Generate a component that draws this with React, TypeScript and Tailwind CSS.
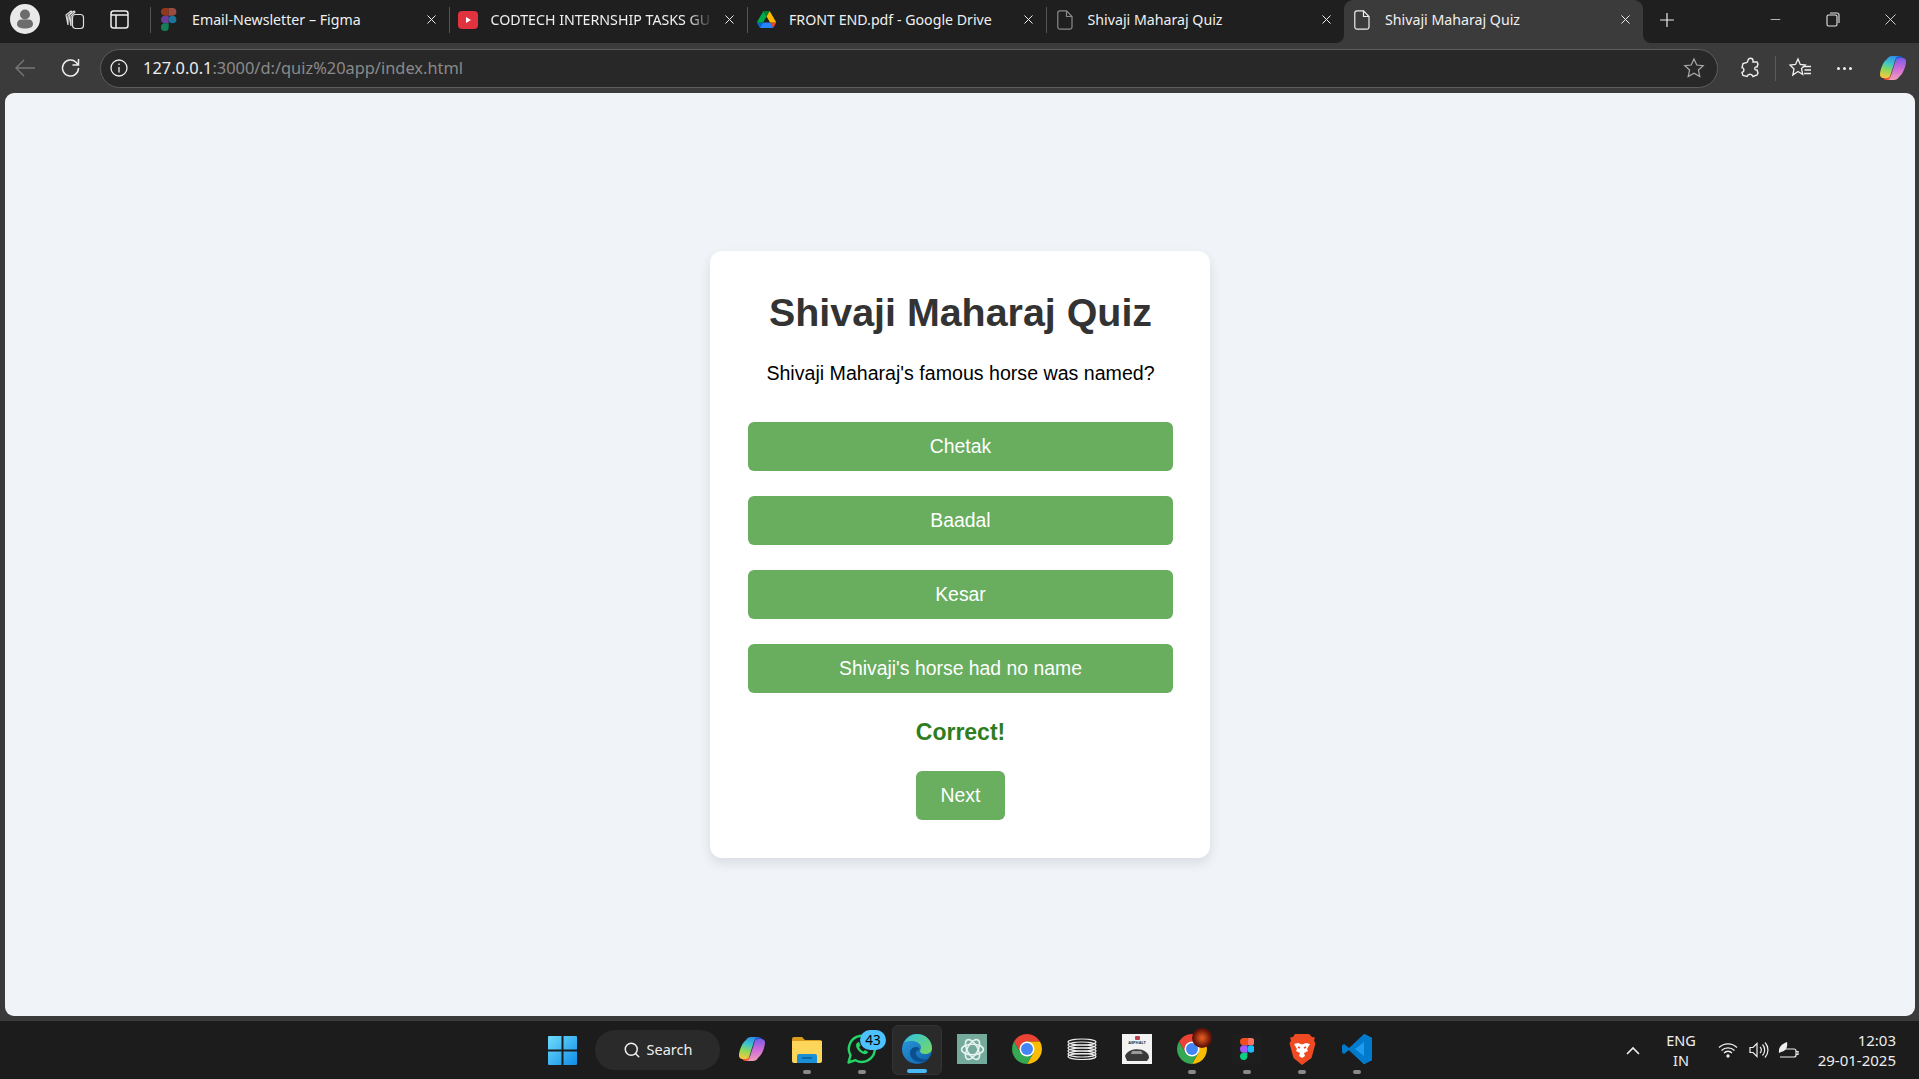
import { Minus, Plus, Search, X } from "lucide-react";

const uiFont = "font-['Noto_Sans','Open_Sans',sans-serif]";

const FigmaLogo = ({ size = 20, dim = false }: { size?: number; dim?: boolean }) => (
  <svg width={size * 0.67} height={size} viewBox="0 0 24 36" opacity={dim ? 0.55 : 1}>
    <path d="M12 0H6a6 6 0 0 0 0 12h6z" fill="#f24e1e" />
    <path d="M12 0h6a6 6 0 0 1 0 12h-6z" fill="#ff7262" />
    <path d="M12 12H6a6 6 0 0 0 0 12h6z" fill="#a259ff" />
    <circle cx="18" cy="18" r="6" fill="#1abcfe" />
    <path d="M6 24h6v6a6 6 0 1 1-6-6z" fill="#0acf83" />
  </svg>
);

const DriveLogo = () => (
  <svg width="19" height="17" viewBox="0 0 87 78">
    <path d="M6.6 66.9l3.9 6.7c.8 1.4 2 2.5 3.3 3.3L27.5 53H0c0 1.6.4 3.1 1.2 4.5z" fill="#0066da" />
    <path d="M43.7 25L30 1.2c-1.4.8-2.5 1.9-3.3 3.3L1.2 48.5C.4 49.9 0 51.4 0 53h27.5z" fill="#00ac47" />
    <path d="M73.5 76.9c1.3-.8 2.5-1.9 3.3-3.3l1.6-2.7 7.6-13.2c.8-1.4 1.2-2.9 1.2-4.5H59.7l5.9 11.5z" fill="#ea4335" />
    <path d="M43.7 25L57.4 1.2C56 .4 54.5 0 52.9 0H34.5c-1.6 0-3.1.5-4.5 1.2z" fill="#00832d" />
    <path d="M59.8 53H27.5L13.8 76.8c1.4.8 2.9 1.2 4.5 1.2h50.8c1.6 0 3.1-.5 4.5-1.2z" fill="#2684fc" />
    <path d="M73.4 26.5L60.7 4.5c-.8-1.4-2-2.5-3.3-3.3L43.7 25l16.1 28h27.4c0-1.6-.4-3.1-1.2-4.5z" fill="#ffba00" />
  </svg>
);

const YoutubeLogo = () => (
  <svg width="20" height="20" viewBox="0 0 20 20">
    <rect x="0" y="1" width="20" height="18" rx="4" fill="#e0323f" />
    <path d="M8 7l5 3-5 3z" fill="#fff" />
  </svg>
);

const PageIcon = ({ color }: { color: string }) => (
  <svg width="16" height="20" viewBox="0 0 16 20" fill="none" stroke={color} strokeWidth="1.2">
    <path d="M3 .8h6.5L15 6.5V17a2.2 2.2 0 0 1-2.2 2.2H3A2.2 2.2 0 0 1 .8 17V3A2.2 2.2 0 0 1 3 .8z" />
    <path d="M9.5.8v5.7H15" />
  </svg>
);

const ribbon = "M8 5c1-2 3-3 5-3h7c-1.500 0-3 1-3.500 3l-5 16c-.6 2-2 3-4 3H4.500C2 24 .6 22 1 19.500 1.700 14.500 4 8 8 5z";

const CopilotLogo = ({ id, size = 28 }: { id: string; size?: number }) => (
  <svg width={size} height={size} viewBox="0 0 28 28">
    <defs>
      <linearGradient id={`${id}L`} x1="0.6" y1="0" x2="0.4" y2="1">
        <stop offset="0" stopColor="#2f8fe8" />
        <stop offset="0.35" stopColor="#3ec6c8" />
        <stop offset="0.65" stopColor="#8ed85a" />
        <stop offset="1" stopColor="#f5c93f" />
      </linearGradient>
      <linearGradient id={`${id}R`} x1="0.5" y1="0" x2="0.5" y2="1">
        <stop offset="0" stopColor="#f0a0b8" />
        <stop offset="0.5" stopColor="#d06cd8" />
        <stop offset="1" stopColor="#7a5ce8" />
      </linearGradient>
    </defs>
    <path d="M16 2h4c2.500 0 4 1.500 4.500 4l-8 1z" fill="#1e5fd0" />
    <path d="M12 26H8c-2.500 0-4-1.500-4.500-4l8-1z" fill="#ee5a3a" />
    <path d={ribbon} fill={`url(#${id}L)`} />
    <path d={ribbon} fill={`url(#${id}R)`} transform="rotate(180 14 14)" />
  </svg>
);

const ChromeLogo = ({ size = 30 }: { size?: number }) => (
  <svg width={size} height={size} viewBox="4 4 40 40">
    <path d="M6.680 14A20 20 0 0 1 41.320 14H24L15.340 29z" fill="#ea4335" />
    <path d="M41.320 14A20 20 0 0 1 24 44L32.660 29 24 14z" fill="#fbbc04" />
    <path d="M24 44A20 20 0 0 1 6.680 14L15.340 29H32.660z" fill="#34a853" />
    <circle cx="24" cy="24" r="10" fill="#fff" />
    <circle cx="24" cy="24" r="8" fill="#4285f4" />
  </svg>
);

const TaskIcon = ({ children, running, active }: { children: React.ReactNode; running?: boolean; active?: boolean }) => (
  <div className={`relative flex h-[50px] w-[50px] items-center justify-center rounded-md ${active ? "border border-[#333] bg-[#2a2a2a]" : ""}`}>
    <div className="flex -translate-y-[1px] items-center justify-center">{children}</div>
    {running && <span className="absolute bottom-[1px] h-[4px] w-[8px] rounded-full bg-[#8a8a8a]" />}
    {active && <span className="absolute bottom-[1px] h-[4px] w-[20px] rounded-full bg-[#47b9f5]" />}
  </div>
);

const Tab = ({ icon, title, active, fade }: { icon: React.ReactNode; title: string; active?: boolean; fade?: boolean }) => (
  <div className={`relative flex h-full w-[298.500px] shrink-0 items-center pb-[4px] pr-[10px] ${active ? "rounded-t-[9px] bg-[#3b3b3b] pl-[8px]" : ""}`}>
    {!active && <span className="mr-[8px] h-[26px] w-px shrink-0 bg-[#555]" />}
    <span className="flex w-[20px] shrink-0 items-center justify-center">{icon}</span>
    <span className={`ml-[13px] min-w-0 flex-1 overflow-hidden whitespace-nowrap text-[14.200px] text-[#f0f0f0] ${fade ? "[mask-image:linear-gradient(to_right,#000_88%,transparent)]" : ""}`}>
      {title}
    </span>
    <X size={15} strokeWidth={1.6} className="ml-2 shrink-0 text-[#eee]" />
    {active && (
      <>
        <svg className="absolute bottom-0 left-[-8px]" width="8" height="8" viewBox="0 0 8 8">
          <path d="M8 0v8H0a8 8 0 0 0 8-8z" fill="#3b3b3b" />
        </svg>
        <svg className="absolute bottom-0 right-[-8px]" width="8" height="8" viewBox="0 0 8 8">
          <path d="M0 0v8h8a8 8 0 0 1-8-8z" fill="#3b3b3b" />
        </svg>
      </>
    )}
  </div>
);

const QuizButton = ({ label }: { label: string }) => (
  <button className="h-[49px] w-full rounded-[6px] bg-[#69ad5f] pt-[1px] text-[19.400px] text-white">{label}</button>
);

export default function App() {
  return (
    <div className={`flex h-[1079px] w-[1919px] flex-col overflow-hidden bg-[#3a3a3a] ${uiFont}`}>
      {/* title bar + tabs */}
      <div className="flex h-[43px] shrink-0 items-stretch bg-[#1f1f1f]">
        <div className="flex w-[150px] shrink-0 items-center pb-[5px]">
          <svg className="ml-[10px]" width="30" height="30" viewBox="0 0 30 30">
            <circle cx="15" cy="15" r="15" fill="#e9e9e9" />
            <circle cx="15" cy="10.500" r="5" fill="#6c6c6c" />
            <path d="M7 20c0-3 2-4.500 4-4.500h8c2 0 4 1.500 4 4.500 0 3-3 4.500-8 4.500s-8-1.500-8-4.500z" fill="#6c6c6c" />
          </svg>
          <svg className="ml-[24px]" width="21" height="21" viewBox="0 0 21 21" fill="none" stroke="#ddd" strokeWidth="1.2">
            <path d="M2 6l5-4 1 1-4 4v9z" />
            <path d="M5 6l5-4 1 1-4 4v10z" />
            <rect x="8.500" y="5.500" width="11" height="14" rx="3" />
          </svg>
          <svg className="ml-[25px]" width="19" height="19" viewBox="0 0 19 19" fill="none" stroke="#eee" strokeWidth="1.500">
            <rect x="1" y="1" width="17" height="17" rx="2.500" />
            <path d="M1 5h17M6 5v13" />
          </svg>
        </div>
        <Tab icon={<FigmaLogo size={23} dim />} title="Email-Newsletter – Figma" />
        <Tab icon={<YoutubeLogo />} title="CODTECH INTERNSHIP TASKS GU" fade />
        <Tab icon={<DriveLogo />} title="FRONT END.pdf - Google Drive" />
        <Tab icon={<PageIcon color="#8a8a8a" />} title="Shivaji Maharaj Quiz" />
        <Tab icon={<PageIcon color="#eee" />} title="Shivaji Maharaj Quiz" active />
        <div className="flex w-[48px] items-center justify-center pb-[4px]">
          <Plus size={22} strokeWidth={1.3} className="text-[#eee]" />
        </div>
        <div className="ml-auto flex items-center pb-[5px] text-[#e8e8e8]">
          <div className="flex w-[58px] justify-center"><Minus size={15} strokeWidth={1.2} /></div>
          <div className="flex w-[58px] justify-center">
            <svg width="14" height="15" viewBox="0 0 14 15" fill="none" stroke="currentColor" strokeWidth="1.100">
              <rect x="1" y="3" width="10" height="11" rx="1.500" />
              <path d="M4 1h7a2 2 0 0 1 2 2v8" />
            </svg>
          </div>
          <div className="flex w-[57px] justify-center"><X size={19} strokeWidth={1.1} /></div>
        </div>
      </div>

      {/* toolbar */}
      <div className="flex h-[50px] shrink-0 items-center bg-[#3b3b3b] pl-[14px]">
        <svg width="22" height="22" viewBox="0 0 22 22" fill="none" stroke="#777" strokeWidth="1.400">
          <path d="M21 11H2M10 3l-8 8 8 8" />
        </svg>
        <svg className="ml-[24px]" width="22" height="22" viewBox="0 0 22 22" fill="none" stroke="#eee" strokeWidth="1.500">
          <path d="M18.500 11a8 8 0 1 1-2.500-5.800L18.500 8M18.500 2v6h-6" />
        </svg>
        <div className="ml-[18px] flex h-[39px] w-[1618px] items-center rounded-full border border-[#5d5d5d] bg-[#282828] pl-[8px] pr-[12px]">
          <svg width="20" height="20" viewBox="0 0 20 20" fill="none" stroke="#eee" strokeWidth="1.300">
            <circle cx="10" cy="10" r="8" />
            <path d="M10 9v5.500M10 5.500v1.500" />
          </svg>
          <span className="ml-[14px] text-[16.400px] text-[#eee]">127.0.0.1<span className="text-[#8a8a8a]">:3000/d:/quiz%20app/index.html</span></span>
          <svg className="ml-auto" width="22" height="22" viewBox="0 0 22 22" fill="none" stroke="#aaa" strokeWidth="1.200">
            <path d="M11 2l2.800 6 6.400.7-4.800 4.300 1.400 6.500L11 16.200l-5.800 3.300 1.400-6.500L1.800 8.700 8.200 8z" />
          </svg>
        </div>
        <svg className="ml-[21px]" width="22" height="22" viewBox="0 0 22 22" fill="none" stroke="#eee" strokeWidth="1.400">
          <path d="M9 3.500c0-3 5-3 5 0v1.500h4l1 2-1 3c-3-1-3 4 0 3l1 3-1 2-4 1.500c-1-3-5-3-6 0l-4-1-1-3c3-1 2-5 0-5l1-4 4-1z" />
        </svg>
        <span className="ml-[14px] h-[25px] w-px bg-[#5a5a5a]" />
        <svg className="ml-[13px]" width="23" height="23" viewBox="0 0 23 23" fill="none" stroke="#eee" strokeWidth="1.300">
          <path d="M9 2l2.300 5.500 5 .5-3.800 3.500 1.200 6L9 14.500 3.800 18l1.200-6L1 8l5.500-.5z" />
          <path d="M15 9.500h7M15.500 13h6.500M15 16.500h7" />
        </svg>
        <div className="ml-[25px] flex items-center gap-[3px]">
          <span className="h-[3px] w-[3px] rounded-full bg-[#eee]" />
          <span className="h-[3px] w-[3px] rounded-full bg-[#eee]" />
          <span className="h-[3px] w-[3px] rounded-full bg-[#eee]" />
        </div>
        <div className="ml-[27px]"><CopilotLogo id="copTop" /></div>
      </div>

      {/* page */}
      <main className="ml-[5px] mr-[4px] flex h-[923px] shrink-0 items-start justify-center rounded-[9px] bg-[#f0f4f8] pt-[158px] font-['Liberation_Sans',Arial,sans-serif]">
        <div className="flex h-[607px] w-[500px] flex-col items-center rounded-[12px] bg-white pl-[38px] pr-[37px] pt-[38px] shadow-[0_5px_12px_rgba(0,0,0,0.1)]">
          <h1 className="text-[39.400px] font-bold leading-[46px] text-[#333]">Shivaji Maharaj Quiz</h1>
          <p className="mt-[27px] text-[19.600px] leading-[23px] text-black">Shivaji Maharaj's famous horse was named?</p>
          <div className="mt-[37px] flex w-full flex-col gap-[25px]">
            <QuizButton label="Chetak" />
            <QuizButton label="Baadal" />
            <QuizButton label="Kesar" />
            <QuizButton label="Shivaji's horse had no name" />
          </div>
          <p className="mt-[25px] text-[23px] font-bold leading-[28px] text-[#2e7d1e]">Correct!</p>
          <button className="mt-[25px] h-[49px] w-[89px] rounded-[6px] bg-[#6aae60] text-[19.400px] text-white">Next</button>
        </div>
      </main>

      {/* taskbar */}
      <div className="mt-[5px] flex h-[58px] shrink-0 items-center bg-[#1c1c1c]">
        <svg className="ml-[548px]" width="29" height="29" viewBox="0 0 29 29">
          <defs>
            <linearGradient id="winG" x1="0" y1="0" x2="1" y2="1">
              <stop offset="0" stopColor="#6fdcfb" />
              <stop offset="1" stopColor="#0f8de8" />
            </linearGradient>
          </defs>
          <path d="M0 1a1 1 0 0 1 1-1h12.500v13.500H0zM15.500 0H28a1 1 0 0 1 1 1v12.500H15.500zM0 15.500h13.500V29H1a1 1 0 0 1-1-1zM15.500 15.500H29V28a1 1 0 0 1-1 1H15.500z" fill="url(#winG)" />
        </svg>
        <div className="ml-[18px] flex h-[40px] w-[125px] items-center justify-center rounded-full bg-[#2a2a2a] text-[14.500px] text-[#eee]">
          <Search size={18} strokeWidth={2} />
          <span className="ml-[6px]">Search</span>
        </div>
        <div className="ml-[7px] flex items-center gap-[5px]">
          <TaskIcon><CopilotLogo id="copTask" /></TaskIcon>
          <TaskIcon running>
            <svg width="30" height="27" viewBox="0 0 30 27">
              <path d="M0 3a2 2 0 0 1 2-2h8l3 3h15a2 2 0 0 1 2 2v3H0z" fill="#d99e1e" />
              <path d="M0 5h30v20a2 2 0 0 1-2 2H2a2 2 0 0 1-2-2z" fill="#fdd55a" />
              <path d="M5 20a2 2 0 0 1 2-2h16a2 2 0 0 1 2 2v7H5z" fill="#1b8fd6" />
              <path d="M10 22h10" stroke="#0c5c99" strokeWidth="1.500" />
            </svg>
          </TaskIcon>
          <TaskIcon running>
            <div className="relative">
              <svg width="30" height="30" viewBox="0 0 30 30" fill="none">
                <path d="M1.500 28.500l2-7.300a13 13 0 1 1 5 5z" stroke="#25d366" strokeWidth="2.400" strokeLinejoin="round" />
                <path d="M10.500 8.500c-1.500 1-2 3-.8 5.500 1.500 3 4 5 7 6 2 .6 3.800-.4 4.500-2l-3.200-2-1.500 1.500c-2-1-3.500-2.500-4.300-4.500l1.300-1.500-1.500-3.500z" fill="#25d366" />
              </svg>
              <span className="absolute left-[13px] top-[-4px] flex h-[20px] w-[26px] items-center justify-center rounded-full bg-[#4cc2ff] text-[13.500px] text-black">43</span>
            </div>
          </TaskIcon>
          <TaskIcon active>
            <svg width="30" height="30" viewBox="0 0 30 30">
              <defs>
                <linearGradient id="edgeA" x1="0" y1="0" x2="1" y2="1">
                  <stop offset="0" stopColor="#2fc2e0" />
                  <stop offset="1" stopColor="#7ad95c" />
                </linearGradient>
                <linearGradient id="edgeB" x1="0" y1="0" x2="1" y2="1">
                  <stop offset="0" stopColor="#2a9be0" />
                  <stop offset="1" stopColor="#0f5fa8" />
                </linearGradient>
              </defs>
              <circle cx="15" cy="15" r="15" fill="url(#edgeB)" />
              <path d="M2 9C5 3 10 0 15 0c8 0 15 6 15 14 0 4-3 6-7 6-3 0-5-1-5-3 0-1 1-2 1-3.500C19 9.500 14 7 10 7 6.500 7 3.500 7.500 2 9z" fill="url(#edgeA)" />
              <path d="M14 13c-4 0-6 3-6 6 0 5 5 9 11 9 3 0 6-1 8-3-2 .5-7 1-11-2-3-2.500-3-6 1-7 1-1 0-3-3-3z" fill="#0b4f8f" />
            </svg>
          </TaskIcon>
          <TaskIcon>
            <div className="flex h-[30px] w-[30px] items-center justify-center bg-[#74aa9c]">
              <svg width="25" height="25" viewBox="0 0 24 24" fill="none" stroke="#e8f3ef" strokeWidth="1.500">
                <ellipse cx="12" cy="12" rx="10.500" ry="5" />
                <ellipse cx="12" cy="12" rx="10.500" ry="5" transform="rotate(60 12 12)" />
                <ellipse cx="12" cy="12" rx="10.500" ry="5" transform="rotate(120 12 12)" />
              </svg>
            </div>
          </TaskIcon>
          <TaskIcon><ChromeLogo /></TaskIcon>
          <TaskIcon>
            <svg width="30" height="22" viewBox="0 0 30 22" fill="none" stroke="#eee" strokeWidth="1.100">
              <ellipse cx="15" cy="4" rx="14" ry="3" />
              <ellipse cx="15" cy="7" rx="14" ry="3" />
              <ellipse cx="15" cy="10" rx="14" ry="3" />
              <ellipse cx="15" cy="13" rx="14" ry="3" />
              <ellipse cx="15" cy="16" rx="14" ry="3" />
              <ellipse cx="15" cy="18.500" rx="14" ry="3" />
            </svg>
          </TaskIcon>
          <TaskIcon>
            <div className="flex h-[30px] w-[30px] flex-col items-center bg-[#f3f3f3]">
              <span className="mt-[2px] h-[4px] w-[5px] rounded-[1px] bg-[#c04050]" />
              <span className="text-[4px] font-bold leading-[5px] text-[#333]">ASPHALT</span>
              <svg className="mt-[1px]" width="26" height="16" viewBox="0 0 26 16">
                <path d="M1 10c1-3 5-6 9-6.500 4-.5 9 0 12 2.500 2 1.500 3 3 3 6l-2 3H3z" fill="#3a3a3a" />
                <path d="M8 5h9l2 3H7z" fill="#9a9a9a" />
              </svg>
            </div>
          </TaskIcon>
          <TaskIcon running>
            <div className="relative">
              <ChromeLogo />
              <span className="absolute left-[15px] top-[-6px] h-[20px] w-[20px] rounded-full bg-[radial-gradient(circle,#d9571e_10%,#6a1408_60%,#2a0a05)]" />
            </div>
          </TaskIcon>
          <TaskIcon running>
            <div className="flex h-[30px] w-[30px] items-center justify-center bg-[#1e1e1e]"><FigmaLogo size={22} /></div>
          </TaskIcon>
          <TaskIcon running>
            <svg width="28" height="32" viewBox="0 0 28 32">
              <path d="M7 1h14l3 3 3 .5-1 3 1.500 3-4 14.500L14 32 5.500 25 1.500 10.500l1.500-3-1-3L5 4z" fill="#f04a23" />
              <path d="M6 11l4-1 4 1.500L18 10l4 1-3 5 1 2-4 2 1 3-3 2-3-2 1-3-4-2 1-2z" fill="#fff" />
              <path d="M10 14l2 1M18 14l-2 1" stroke="#f04a23" strokeWidth="1.500" />
            </svg>
          </TaskIcon>
          <TaskIcon running>
            <svg width="30" height="30" viewBox="0 0 30 30">
              <path d="M22 0l8 4v22l-8 4L7 16l15-12z" fill="#1f9cf0" />
              <path d="M22 0L7 14 2 10 0 11.500v7L2 20l5-4 15 14 8-4V4zm0 8v14l-9-7z" fill="#007acc" fillRule="evenodd" />
            </svg>
          </TaskIcon>
        </div>
        <svg className="ml-[244px]" width="14" height="9" viewBox="0 0 14 9" fill="none" stroke="#eee" strokeWidth="1.600">
          <path d="M1 8l6-6 6 6" />
        </svg>
        <div className="ml-[24px] flex w-[34px] flex-col items-center text-[14.500px] leading-[20px] text-[#eee]">
          <span>ENG</span>
          <span>IN</span>
        </div>
        <svg className="ml-[20px]" width="20" height="16" viewBox="0 0 20 16" fill="none" stroke="#eee" strokeWidth="1.300">
          <path d="M1 5.500a13 13 0 0 1 18 0M3.500 8.500a9.500 9.500 0 0 1 13 0M6 11a5.500 5.500 0 0 1 8 0" />
          <circle cx="10" cy="14" r="1" fill="#eee" />
        </svg>
        <svg className="ml-[11px]" width="20" height="18" viewBox="0 0 20 18" fill="none" stroke="#eee" strokeWidth="1.200">
          <path d="M1 6.500h3l4-4v13l-4-4H1z" />
          <path d="M11 6a4 4 0 0 1 0 6M13.500 3.500a8 8 0 0 1 0 11M16 1.500a11 11 0 0 1 0 15" />
        </svg>
        <svg className="ml-[9px]" width="21" height="18" viewBox="0 0 21 18" fill="none" stroke="#eee" strokeWidth="1.200">
          <path d="M7 8h9a2 2 0 0 1 2 2v4a2 2 0 0 1-2 2H2" />
          <path d="M18 10.500h2v3h-2" />
          <path d="M1 12C0 6 4 3 9 1c1 5-1 9-6 10z" fill="#eee" stroke="none" />
        </svg>
        <div className="ml-auto mr-[23px] flex flex-col items-end text-[15px] leading-[20px] text-[#eee]">
          <span>12:03</span>
          <span>29-01-2025</span>
        </div>
      </div>
    </div>
  );
}
